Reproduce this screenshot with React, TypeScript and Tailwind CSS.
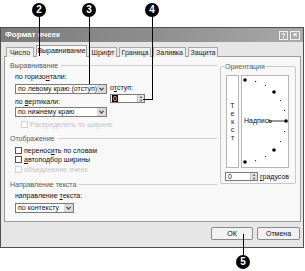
import React from 'react';

// callout marker (black disc with a number)
const Callout = ({ n, className }: { n: number; className: string }) => (
  <div
    className={`absolute z-20 w-[14px] h-[14px] rounded-full bg-black text-white text-[10px] font-bold flex items-center justify-center leading-none ${className}`}
  >
    {n}
  </div>
);

const GroupLabel = ({ label, className = '' }: { label: string; className?: string }) => (
  <div className={`flex items-center gap-[3px] h-[9px] ${className}`}>
    <span className="text-[7px] leading-[9px] text-[#5a5a5a] whitespace-nowrap">{label}</span>
    <div className="flex-1 h-px bg-[#cfcfcf]" />
  </div>
);

const Chevron = () => (
  <svg width="5" height="4" viewBox="0 0 5 4">
    <path d="M0.5 0.8 L2.5 3 L4.5 0.8" fill="none" stroke="#3a3a3a" strokeWidth="1.1" />
  </svg>
);

const Select = ({ value, className }: { value: string; className: string }) => (
  <div className={`flex h-[10px] border border-[#7a7a7a] bg-white ${className}`}>
    <span className="flex-1 text-[7px] leading-[8px] pl-[2px] whitespace-nowrap text-[#111]">{value}</span>
    <span className="w-[9px] bg-[#dadada] flex items-center justify-center">
      <Chevron />
    </span>
  </div>
);

const Spinner = () => (
  <span className="w-[7px] flex flex-col bg-[#e2e2e2] border-l border-[#bdbdbd]">
    <span className="flex-1 flex items-center justify-center text-[4px] leading-none text-[#555]">▲</span>
    <span className="flex-1 flex items-center justify-center text-[4px] leading-none text-[#555]">▼</span>
  </span>
);

const Check = ({ label, disabled }: { label: React.ReactNode; disabled?: boolean }) => (
  <div className="flex items-center gap-[2px] h-[7px]">
    <span
      className={`w-[7px] h-[7px] border bg-white ${disabled ? 'border-[#d2d2d2]' : 'border-[#555]'}`}
    />
    <span className={`text-[7px] leading-[7px] whitespace-nowrap ${disabled ? 'text-[#c4c4c4]' : 'text-[#111]'}`}>
      {label}
    </span>
  </div>
);

const tabs = ['Число', 'Выравнивание', 'Шрифт', 'Граница', 'Заливка', 'Защита'];
const tabWidths = ['w-[28px]', 'w-[51px]', 'w-[28px]', 'w-[32px]', 'w-[33px]', 'w-[30px]'];

// dots of the orientation dial, angle in degrees
const dialAngles = [90, 75, 60, 45, 30, 15, 0, -15, -30, -45, -60, -75, -90];

const Dial = () => (
  <div className="relative w-[48px] h-[93px] border border-[#b5b5b5] bg-white">
    <svg className="absolute left-0 top-0" width="46" height="91" viewBox="0 0 46 91">
      {dialAngles.map((a) => {
        const r = (a * Math.PI) / 180;
        const big = a % 45 === 0;
        return (
          <circle
            key={a}
            cx={3 + 41 * Math.cos(r)}
            cy={45 - 41 * Math.sin(r)}
            r={big ? 1.8 : 0.6}
            fill="#000"
          />
        );
      })}
      <line x1="26" y1="45" x2="43" y2="45" stroke="#333" strokeWidth="1" />
    </svg>
    <span className="absolute left-[2px] top-[41px] text-[7px] leading-[8px] text-[#111]">Надпись</span>
  </div>
);

const App = () => {
  return (
    <div className="relative w-[305px] h-[271px] bg-white overflow-hidden font-['Liberation_Sans',Arial,sans-serif]">
      {/* callouts */}
      <Callout n={2} className="left-[32px] top-[3px]" />
      <Callout n={3} className="left-[82px] top-[3px]" />
      <Callout n={4} className="left-[145px] top-[3px]" />
      <Callout n={5} className="left-[236px] top-[255px]" />
      <div className="absolute z-20 left-[39px] top-[16px] w-px h-[40px] bg-black" />
      <div className="absolute z-20 left-[89px] top-[16px] w-px h-[68px] bg-black" />
      <div className="absolute z-20 left-[152px] top-[16px] w-px h-[84px] bg-black" />
      <div className="absolute z-20 left-[143px] top-[99px] w-[10px] h-px bg-black" />
      <div className="absolute z-20 left-[243px] top-[234px] w-px h-[22px] bg-black" />

      {/* dialog */}
      <div className="mt-[27px] w-[304px] h-[221px] border border-[#505050] bg-[#e6e6e6] flex flex-col">
        <div className="h-[14px] flex items-center bg-gradient-to-r from-[#7c7c7c] via-[#8e8e8e] to-[#a9a9a9] pl-[4px] pr-[3px]">
          <span className="flex-1 text-white text-[8px] font-bold leading-none whitespace-nowrap">Формат ячеек</span>
          <span className="w-[9px] h-[9px] border border-[#f0f0f0] bg-[#a8a8a8] text-white text-[7px] font-bold leading-none flex items-center justify-center">?</span>
          <span className="ml-[2px] w-[10px] h-[9px] border border-[#f0f0f0] bg-[#a8a8a8] text-white text-[8px] font-bold leading-none flex items-center justify-center">×</span>
        </div>

        <div className="flex-1 flex flex-col pl-[3px] pr-[3px] pt-[4px]">
          {/* tabs */}
          <div className="flex items-end gap-[2px] pl-[2px] h-[11px] -mb-px relative z-10">
            {tabs.map((t, i) =>
              i === 1 ? (
                <div
                  key={t}
                  className={`${tabWidths[i]} h-[12px] border border-b-0 border-[#9c9c9c] bg-[#f8f8f8] text-[7px] leading-[10px] text-center text-[#111] whitespace-nowrap`}
                >
                  {t}
                </div>
              ) : (
                <div
                  key={t}
                  className={`${tabWidths[i]} h-[10px] border border-b-0 border-[#a6a6a6] bg-[#eeeeee] text-[7px] leading-[9px] text-center text-[#222] whitespace-nowrap`}
                >
                  {t}
                </div>
              )
            )}
          </div>

          {/* panel */}
          <div className="w-[297px] h-[166px] border border-[#9c9c9c] bg-[#f8f8f8] flex">
            <div className="ml-[5px] w-[207px] flex flex-col pt-[4px]">
              <GroupLabel label="Выравнивание" />
              <div className="flex pl-[5px] mt-[3px]">
                <div className="flex flex-col w-[92px]">
                  <span className="text-[7px] leading-[8px] text-[#111]">
                    по горизо<span className="underline">н</span>тали:
                  </span>
                  <Select value="по левому краю (отступ)" className="mt-[3px] w-[92px]" />
                  <span className="mt-[4px] text-[7px] leading-[8px] text-[#111]">
                    по <span className="underline">в</span>ертикали:
                  </span>
                  <Select value="по нижнему краю" className="mt-[1px] w-[92px]" />
                </div>
                <div className="ml-[3px] flex flex-col pt-[11px]">
                  <span className="text-[7px] leading-[8px] text-[#111]">
                    о<span className="underline">т</span>ступ:
                  </span>
                  <div className="mt-[2px] w-[35px] h-[9px] border border-[#7a7a7a] bg-white flex">
                    <span className="flex-1 flex items-center pl-[1px]">
                      <span className="bg-black text-white text-[7px] leading-[7px] px-[1px]">0</span>
                    </span>
                    <Spinner />
                  </div>
                </div>
              </div>
              <div className="pl-[11px] mt-[4px]">
                <Check label="Распределять по ширине" disabled />
              </div>

              <GroupLabel label="Отображение" className="mt-[6px]" />
              <div className="pl-[5px] mt-[4px] flex flex-col gap-[2px]">
                <Check label={<>перенос<span className="underline">и</span>ть по словам</>} />
                <Check label={<><span className="underline">а</span>втоподбор ширины</>} />
                <div className="mt-[1px]">
                  <Check label="объединение ячеек" disabled />
                </div>
              </div>

              <GroupLabel label="Направление текста" className="mt-[7px]" />
              <div className="pl-[5px] mt-[3px] flex flex-col">
                <span className="text-[7px] leading-[8px] text-[#111]">
                  направление <span className="underline">т</span>екста:
                </span>
                <Select value="по контексту" className="mt-[3px] w-[59px]" />
              </div>
            </div>

            {/* orientation */}
            <div className="ml-[3px] mt-[9px] w-[76px] h-[118px] relative border border-[#c8c8c8] rounded-[2px] px-[5px] pt-[8px]">
              <span className="absolute left-[3px] -top-[5px] px-[1px] bg-[#f8f8f8] text-[7px] leading-[9px] text-[#5a5a5a]">
                Ориентация
              </span>
              <div className="flex gap-[2px]">
                <div className="w-[13px] h-[93px] border border-[#b5b5b5] bg-white flex flex-col items-center justify-center">
                  {['Т', 'е', 'к', 'с', 'т'].map((c, i) => (
                    <span key={i} className="text-[7px] leading-[8px] text-[#222]">
                      {c}
                    </span>
                  ))}
                </div>
                <Dial />
              </div>
              <div className="mt-[4px] -ml-[1px] flex items-center">
                <div className="w-[33px] h-[9px] border border-[#7a7a7a] bg-white flex">
                  <span className="flex-1 text-[7px] leading-[7px] pl-[2px] text-[#111]">0</span>
                  <Spinner />
                </div>
                <span className="ml-[2px] text-[7px] leading-[8px] text-[#111]">
                  <span className="underline">г</span>радусов
                </span>
              </div>
            </div>
          </div>

          {/* buttons */}
          <div className="flex justify-end gap-[4px] mt-[5px] pr-[0px]">
            <div className="w-[42px] h-[13px] border border-[#8a8a8a] rounded-[2px] bg-[#f2f2f2] text-[7px] leading-[11px] text-center text-[#111]">
              ОК
            </div>
            <div className="w-[43px] h-[13px] border border-[#8a8a8a] rounded-[2px] bg-[#f2f2f2] text-[7px] leading-[11px] text-center text-[#111]">
              Отмена
            </div>
          </div>
        </div>
      </div>
    </div>
  );
};

export default App;
